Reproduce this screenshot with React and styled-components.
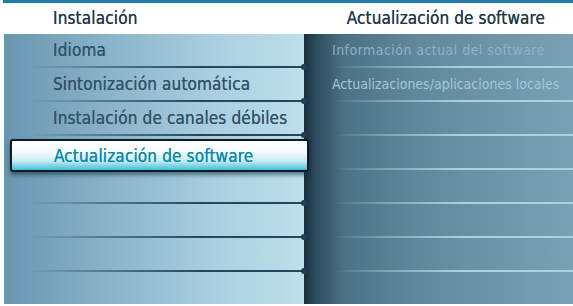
import React from "react"
import styled, { createGlobalStyle } from "styled-components"

const Global = createGlobalStyle`
    html, body {
        margin: 0;
        padding: 0;
        background: #ffffff;
    }
    body {
        font-family: "DejaVu Sans Condensed", "DejaVu Sans", sans-serif;
    }
`

const Screen = styled.div`
    width: 573px;
    height: 306px;
    overflow: hidden;
    background: #ffffff;
    padding-left: 4px;
    box-sizing: border-box;
`

const Header = styled.header`
    height: 34px;
    box-sizing: border-box;
    border-top: 3px solid #1f7ea3;
    margin-left: -1px;
    display: flex;
    align-items: center;
`

const HeaderLeft = styled.div`
    width: 300px;
    padding-left: 50px;
    box-sizing: border-box;
    font-size: 17px;
    letter-spacing: 0.15px;
    color: #22394a;
    margin-top: -2px;
    text-shadow: 0 0 0.4px #22394a;
`

const HeaderRight = styled.div`
    flex: 1;
    text-align: right;
    padding-right: 28px;
    font-size: 17px;
    letter-spacing: 0.1px;
    color: #22394a;
    margin-top: -2px;
    text-shadow: 0 0 0.4px #22394a;
`

const Body = styled.div`
    display: flex;
    height: 270px;
`

const LeftPanel = styled.div`
    width: 300px;
    background: linear-gradient(to right, #6996b0 0%, #86afc6 30%, #aacfe0 70%, #bedfeb 100%);
    display: flex;
    flex-direction: column;
`

const RightPanel = styled.div`
    flex: 1;
    overflow: hidden;
    background: linear-gradient(to right, #182f3e 0px, #2d4b5c 12px, #4d7184 40px, #62879a 110px, #7aa1b4 100%);
    display: flex;
    flex-direction: column;
`

const Row = styled.div`
    position: relative;
    height: 34px;
    flex: none;
    box-sizing: border-box;
    display: flex;
    align-items: center;
    &::after {
        content: "";
        position: absolute;
        left: 0;
        right: 0;
        bottom: 0;
        height: 2px;
        background: ${props => props.$light
            ? "linear-gradient(to right, rgba(170,210,226,0) 10%, rgba(170,210,226,0.55) 35%, #a9d2e3 60%)"
            : "linear-gradient(to right, rgba(34,66,84,0) 8%, rgba(34,66,84,0.55) 35%, #23465a 65%)"};
    }
`

const LastRow = styled.div`
    flex: 1;
`

const Dot = styled.span`
    position: absolute;
    right: -3px;
    bottom: -2px;
    width: 6px;
    height: 6px;
    border-radius: 50%;
    background: #1f3f51;
    z-index: 1;
`

const Item = styled.span`
    padding-left: 49px;
    font-size: 17px;
    letter-spacing: 0.15px;
    color: #33536a;
    margin-top: -2px;
    white-space: nowrap;
    text-shadow: 0 0 0.4px #33536a;
`

const SubItem = styled.span`
    padding-left: 28px;
    font-size: 14px;
    letter-spacing: ${props => props.$dim ? "0.45px" : "0"};
    color: ${props => props.$dim ? "#8cb4c7" : "#a3c8d9"};
    margin-top: -2px;
    white-space: nowrap;
`

const SelectedRow = styled.div`
    position: relative;
    height: 34px;
    flex: none;
    z-index: 2;
`

const SelectedBox = styled.div`
    position: absolute;
    left: 6px;
    right: -5px;
    top: 3px;
    height: 33px;
    box-sizing: border-box;
    border: 2px solid #0c1c24;
    border-radius: 3px;
    background: linear-gradient(to bottom, #ffffff 0%, #f4fbfd 40%, #c5eaf2 70%, #3fbfd6 100%);
    box-shadow: 0 3px 4px rgba(10, 40, 60, 0.55);
    display: flex;
    align-items: center;
    padding-left: 42px;
    font-size: 17px;
    letter-spacing: 0.15px;
    color: #1089a8;
    text-shadow: 0 0 0.4px #1089a8;
    white-space: nowrap;
`

const leftItems = [
    "Idioma",
    "Sintonización automática",
    "Instalación de canales débiles"
]

const rightItems = [
    { label: "Información actual del software", dim: true },
    { label: "Actualizaciones/aplicaciones locales", dim: false }
]

const App = () =>
    <Screen>
        <Global />
        <Header>
            <HeaderLeft>Instalación</HeaderLeft>
            <HeaderRight>Actualización de software</HeaderRight>
        </Header>
        <Body>
            <LeftPanel>
                {leftItems.map(label =>
                    <Row key={label}>
                        <Item>{label}</Item>
                        <Dot />
                    </Row>
                )}
                <SelectedRow>
                    <SelectedBox>Actualización de software</SelectedBox>
                </SelectedRow>
                {[0, 1, 2].map(i =>
                    <Row key={i}>
                        <Dot />
                    </Row>
                )}
                <LastRow />
            </LeftPanel>
            <RightPanel>
                {rightItems.map(item =>
                    <Row key={item.label} $light>
                        <SubItem $dim={item.dim}>{item.label}</SubItem>
                    </Row>
                )}
                {[0, 1, 2, 3, 4, 5].map(i =>
                    <Row key={i} $light />
                )}
            </RightPanel>
        </Body>
    </Screen>

export default App
